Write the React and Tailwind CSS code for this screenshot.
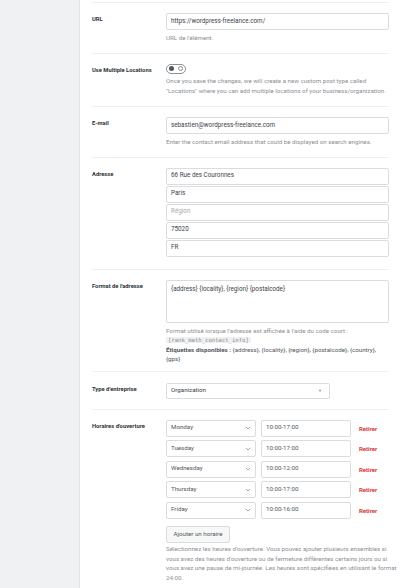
import React from "react";

const days = [
  { day: "Monday", time: "10:00-17:00" },
  { day: "Tuesday", time: "10:00-17:00" },
  { day: "Wednesday", time: "10:00-12:00" },
  { day: "Thursday", time: "10:00-17:00" },
  { day: "Friday", time: "10:00-16:00" },
];

const Row = ({ label, children, className = "" }) => (
  <div className={`flex border-b border-[#f0f0f1] ${className}`}>
    <div className="w-[74px] shrink-0 pt-[2px] text-[5.8px] font-bold text-[#2c3338] leading-[9px]">
      {label}
    </div>
    <div className="flex-1 min-w-0">{children}</div>
  </div>
);

const Input = ({ value, placeholder = false }) => (
  <div
    className={`h-[17px] flex items-center px-[4px] border border-[#dcdcde] rounded-[2px] bg-white text-[6.3px] ${
      placeholder ? "text-[#a7aaad]" : "text-[#3c434a]"
    }`}
  >
    {value}
  </div>
);

// lines are given one by one so they break where the screenshot breaks them
const Desc = ({ lines, className = "" }) => (
  <div className={`text-[6.2px] leading-[9.5px] text-[#8c8f94] whitespace-nowrap ${className}`}>
    {lines.map((l, i) => (
      <div key={i}>{l}</div>
    ))}
  </div>
);

const Chevron = () => (
  <svg width="6" height="4" viewBox="0 0 6 4" className="shrink-0">
    <path d="M1 1l2 2 2-2" fill="none" stroke="#8c8f94" strokeWidth="0.8" />
  </svg>
);

export default function App() {
  return (
    <div className="flex w-[400px] h-[588px] overflow-hidden bg-white font-[Roboto,'Open_Sans',sans-serif]">
      <div className="w-[80px] shrink-0 bg-[#f0f1f3] border-r border-[#e2e4e7]" />
      <div className="flex-1 min-w-0 pl-[12px] pr-[11px]">
        <div className="h-[3px] border-b border-[#f0f0f1]" />

        <Row label="URL" className="pt-[10px] pb-[9px]">
          <Input value="https://wordpress-freelance.com/" />
          <Desc className="mt-[4px]" lines={["URL de l'élément."]} />
        </Row>

        <Row label="Use Multiple Locations" className="pt-[10px] pb-[10px]">
          <div className="w-[20px] h-[10px] rounded-full border border-[#8c8f94] flex items-center justify-between px-[2px]">
            <span className="w-[5px] h-[5px] rounded-full bg-[#50575e]" />
            <span className="w-[3px] h-[3px] rounded-full border border-[#8c8f94] box-content" />
          </div>
          <Desc
            className="mt-[3.5px]"
            lines={[
              "Once you save the changes, we will create a new custom post type called",
              "\"Locations\" where you can add multiple locations of your business/organization.",
            ]}
          />
        </Row>

        <Row label="E-mail" className="pt-[10px] pb-[9px]">
          <Input value="sebastien@wordpress-freelance.com" />
          <Desc
            className="mt-[4px]"
            lines={["Enter the contact email address that could be displayed on search engines."]}
          />
        </Row>

        <Row label="Adresse" className="pt-[10px] pb-[12px]">
          <div className="flex flex-col gap-[1px]">
            <Input value="66 Rue des Couronnes" />
            <Input value="Paris" />
            <Input value="Région" placeholder />
            <Input value="75020" />
            <Input value="FR" />
          </div>
        </Row>

        <Row label="Format de l'adresse" className="pt-[10px] pb-[6px]">
          <div className="h-[43px] border border-[#dcdcde] rounded-[2px] px-[4px] pt-[4px] text-[6.3px] text-[#3c434a] leading-[9px]">
            {"{address} {locality}, {region} {postalcode}"}
          </div>
          <Desc
            className="mt-[4px]"
            lines={[
              "Format utilisé lorsque l'adresse est affichée à l'aide du code court :",
              <code className="bg-[#f0f0f1] px-[2px] text-[5.6px] text-[#8c8f94] font-['DejaVu_Sans_Mono',monospace]">
                [rank_math_contact_info]
              </code>,
              <span className="text-[#50575e]">
                <span className="font-bold">Étiquettes disponibles :</span>{" "}
                {"{address}, {locality}, {region}, {postalcode}, {country},"}
              </span>,
              <span className="text-[#50575e]">{"{gps}"}</span>,
            ]}
          />
        </Row>

        <Row label="Type d'entreprise" className="pt-[11px] pb-[10px]">
          <div className="w-[164px] h-[16px] flex items-center justify-between px-[4px] border border-[#dcdcde] rounded-[2px] text-[6.2px] text-[#3c434a]">
            <span>Organization</span>
            <span className="text-[4px] text-[#8c8f94] mr-[3px]">▼</span>
          </div>
        </Row>

        <Row label="Horaires d'ouverture" className="pt-[10px] pb-[8px]">
          <div className="flex flex-col gap-[3.5px]">
            {days.map((d) => (
              <div key={d.day} className="flex items-center">
                <div className="w-[90px] h-[17px] flex items-center justify-between px-[4px] border border-[#dcdcde] rounded-[2px] text-[6.2px] text-[#50575e]">
                  <span>{d.day}</span>
                  <Chevron />
                </div>
                <div className="ml-[5px] w-[90px] h-[17px] flex items-center px-[4px] border border-[#dcdcde] rounded-[2px] text-[6.2px] text-[#50575e]">
                  {d.time}
                </div>
                <span className="ml-[8px] text-[6px] font-bold text-[#d63638]">Retirer</span>
              </div>
            ))}
          </div>
          <button className="mt-[3px] w-[64px] h-[17px] border border-[#dcdcde] rounded-[2px] bg-[#f6f7f7] text-[6.2px] text-[#50575e]">
            Ajouter un horaire
          </button>
          <Desc
            className="mt-[2.5px]"
            lines={[
              "Sélectionnez les heures d'ouverture. Vous pouvez ajouter plusieurs ensembles si",
              "vous avez des heures d'ouverture ou de fermeture différentes certains jours ou si",
              "vous avez une pause de mi-journée. Les heures sont spécifiées en utilisant le format",
              "24:00.",
            ]}
          />
        </Row>
      </div>
    </div>
  );
}
